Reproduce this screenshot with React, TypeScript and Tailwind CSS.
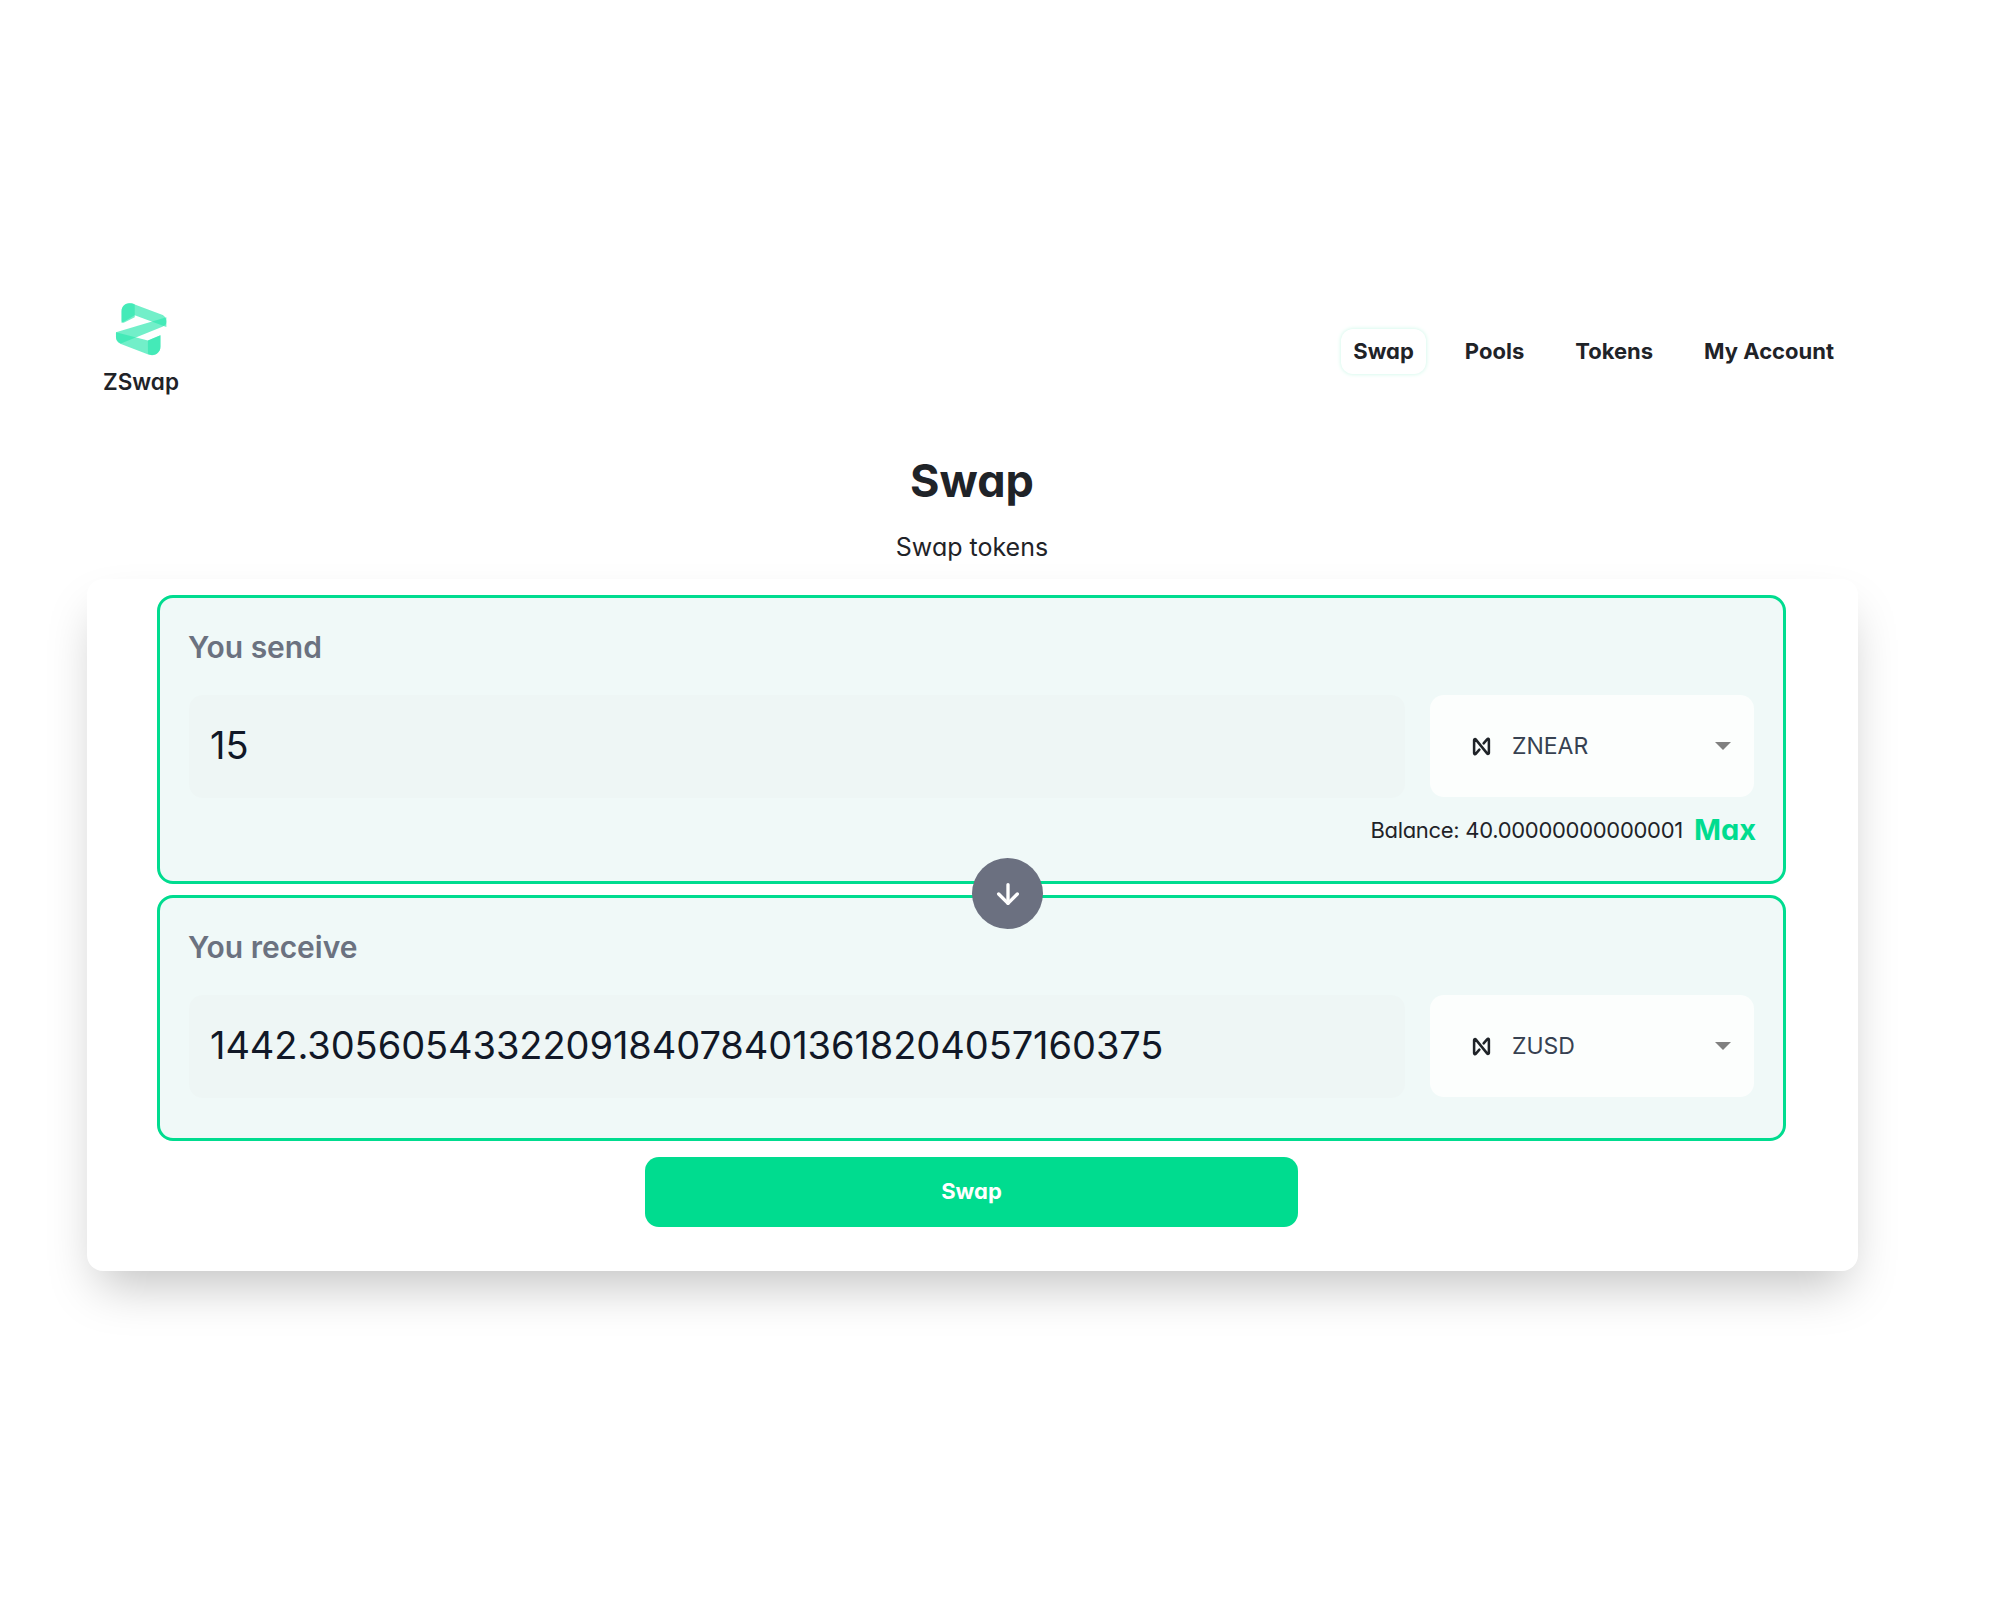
import { ArrowDown } from 'lucide-react'

function Logo() {
  return (
    <svg width="54" height="54" viewBox="100 64 162 164" fill="#2fe8b0" fillOpacity="0.68">
      <path d="M122 92C122 74 140 62 160 71L243 102C254 106 258 114 258 126V140L162 104L122 128Z" />
      <path d="M122 92C122 76 134 68 148 68C156 68 162 70 162 72V110L130 126C126 128 122 126 122 120Z" />
      <path d="M258 110V124C258 132 254 136 246 139L120 190C112 186 105 180 105 170V156Z" />
      <path d="M105 156L202 181L240 165V200C240 216 226 230 205 224L122 192C112 188 105 182 105 170Z" />
      <path d="M240 165V200C240 216 226 226 212 225C206 224 202 222 202 220V181Z" />
    </svg>
  )
}

function NearIcon() {
  return (
    <svg width="19" height="19" viewBox="0 0 18 18" className="shrink-0">
      <path
        d="M2 15.5V2.8C2 2 3 1.7 3.5 2.3L14.5 15.7C15 16.3 16 16 16 15.2V2.5M2 15.5C2 16.3 3 16.6 3.5 16L7 12M16 2.5C16 1.7 15 1.4 14.5 2L11 6"
        fill="none"
        stroke="#1f2328"
        strokeWidth="2.4"
        strokeLinecap="round"
        strokeLinejoin="round"
      />
    </svg>
  )
}

function TokenSelect({ token }: { token: string }) {
  return (
    <div className="w-[324px] h-[102px] shrink-0 bg-[#fcfefd] rounded-[14px] flex items-center pl-[42px] pr-[23px]">
      <NearIcon />
      <span className="ml-[21px] text-[23px] text-[#374151]">{token}</span>
      <span className="ml-auto w-0 h-0 border-x-[8px] border-x-transparent border-t-[8px] border-t-[#808080]" />
    </div>
  )
}

function SwapPanel({ label, amount, token, balance }: { label: string; amount: string; token: string; balance?: string }) {
  return (
    <div className={`border-[3px] border-[#00dc8f] rounded-2xl bg-[#f0f9f8] px-[29px] pt-[29px] ${balance ? 'pb-[31px]' : 'pb-[40px]'}`}>
      <div className="text-[30px] leading-[40px] font-semibold text-[#6b7280] -ml-px">{label}</div>
      <div className="mt-[28px] flex gap-[25px]">
        <div className="flex-1 h-[103px] rounded-[14px] bg-[#eef6f5] flex items-center pl-[21px] pb-[3px] text-[38px] text-[#111827] tracking-[-0.07px]">
          {amount}
        </div>
        <TokenSelect token={token} />
      </div>
      {balance && (
        <div className="mt-[12px] -mr-[2px] flex items-center justify-end gap-[11px] h-[40px]">
          <span className="text-[22px] text-[#1f2328] tracking-[-0.3px]">Balance: {balance}</span>
          <span className="text-[29px] font-bold text-[#00dc8f]">Max</span>
        </div>
      )}
    </div>
  )
}

export default function App() {
  return (
    <div className="w-[1944px] min-h-[1600px] bg-white font-['Inter',sans-serif] [font-feature-settings:'cv11'] text-[#1f2328] pt-[302px]">
      <header className="flex items-start justify-between pl-[103px] pr-[98px]">
        <div className="flex flex-col items-center">
          <Logo />
          <span className="mt-[11px] text-[22.5px] leading-[30px] font-semibold">ZSwap</span>
        </div>
        <nav className="flex items-center gap-[27px] mt-[27px] text-[22px] font-bold">
          <a className="h-[45px] px-[12px] flex items-center justify-center rounded-xl bg-white shadow-[0_0_4px_#c8f7e6]">Swap</a>
          <a className="px-[12px]">Pools</a>
          <a className="px-[12px]">Tokens</a>
          <a className="px-[12px]">My Account</a>
        </nav>
      </header>

      <h1 className="mt-[54px] text-center text-[45px] leading-[60px] font-bold">Swap</h1>
      <p className="mt-[18px] text-center text-[25px] leading-[36px]">Swap tokens</p>

      <main className="relative mt-[14px] mx-[87px] w-[1771px] rounded-2xl bg-white shadow-[0_25px_50px_-12px_rgba(0,0,0,0.25)] pl-[70px] pr-[72px] pt-[16px] pb-[44px]">
        <div className="relative flex flex-col gap-[11px]">
          <SwapPanel label="You send" amount="15" token="ZNEAR" balance="40.00000000000001" />
          <SwapPanel label="You receive" amount="1442.30560543322091840784013618204057160375" token="ZUSD" />
          <button className="absolute left-[815px] top-[263px] w-[71px] h-[71px] rounded-full bg-[#6b7080] flex items-center justify-center text-white">
            <ArrowDown size={32} strokeWidth={2.5} />
          </button>
        </div>
        <button className="block mx-auto mt-[16px] w-[653px] h-[70px] pb-[2px] rounded-[14px] bg-[#00dc8f] text-white text-[22px] font-bold">
          Swap
        </button>
      </main>
    </div>
  )
}
